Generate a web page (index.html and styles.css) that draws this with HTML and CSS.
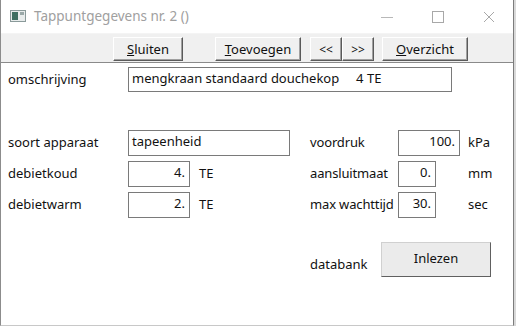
FILE: index.html
```html
<!DOCTYPE html>
<html lang="nl">
<head>
    <meta charset="UTF-8">
    <title>Tappuntgegevens nr. 2 ()</title>
    <link rel="stylesheet" href="styles.css">
</head>
<body>
    <div class="window">
        <div class="titlebar">
            <svg class="app-icon" width="16" height="12" viewBox="0 0 16 12">
                <rect x="0.5" y="0.5" width="15" height="11" fill="#e8ecec" stroke="#8a9a9a"/>
                <rect x="2" y="2" width="6" height="8" fill="#3f6f62"/>
                <rect x="10" y="2" width="4" height="3" fill="#9aa8a8"/>
            </svg>
            <span class="title">Tappuntgegevens nr. 2 ()</span>
            <div class="controls">
                <svg width="46" height="30" viewBox="0 0 46 30"><line x1="17" y1="15.5" x2="29" y2="15.5" stroke="#b8b8b8"/></svg>
                <svg width="46" height="30" viewBox="0 0 46 30"><rect x="17.5" y="9.5" width="11" height="11" fill="none" stroke="#a8a8a8"/></svg>
                <svg width="46" height="30" viewBox="0 0 46 30"><path d="M18 10 L28 20 M28 10 L18 20" stroke="#a8a8a8"/></svg>
            </div>
        </div>

        <div class="toolbar">
            <button class="btn w-sluiten"><u>S</u>luiten</button>
            <button class="btn w-toevoegen"><u>T</u>oevoegen</button>
            <div class="nav-pair">
                <button class="btn w-nav">&lt;&lt;</button>
                <button class="btn w-nav">&gt;&gt;</button>
            </div>
            <button class="btn w-overzicht"><u>O</u>verzicht</button>
        </div>

        <div class="content">
            <div class="row-top">
                <span class="label">omschrijving</span>
                <div class="field wide">mengkraan standaard douchekop&nbsp;&nbsp;&nbsp;&nbsp;&nbsp;4 TE</div>
            </div>

            <div class="grid">
                <span class="label">soort apparaat</span>
                <div class="cell"><div class="field mid">tapeenheid</div></div>
                <span class="label right">voordruk</span>
                <div class="cell"><div class="field num w62">100.</div><span class="unit">kPa</span></div>

                <span class="label">debietkoud</span>
                <div class="cell"><div class="field num w62">4.</div><span class="unit te">TE</span></div>
                <span class="label right">aansluitmaat</span>
                <div class="cell"><div class="field num w38">0.</div><span class="unit">mm</span></div>

                <span class="label">debietwarm</span>
                <div class="cell"><div class="field num w62">2.</div><span class="unit te">TE</span></div>
                <span class="label right">max wachttijd</span>
                <div class="cell"><div class="field num w38">30.</div><span class="unit">sec</span></div>
            </div>

            <div class="row-db">
                <span class="label">databank</span>
                <button class="btn-flat">Inlezen</button>
            </div>
        </div>
    </div>
</body>
</html>
```

FILE: styles.css
```css
body {
    margin: 0;
    background: #d9d9d9;
    font-family: "Noto Sans", "Open Sans", sans-serif;
    font-size: 13px;
    color: #111;
}
.window {
    width: 512px;
    height: 325px;
    background: white;
    border-left: 1px solid #8c8c8c;
    border-right: 1px solid #7c7c7c;
    border-bottom: 1px solid #c8c8c8;
    overflow: hidden;
}
.titlebar {
    height: 33px;
    display: flex;
    align-items: center;
    background: white;
}
.app-icon {
    margin-left: 9px;
    margin-right: 8px;
    margin-top: -1px;
}
.title {
    color: #a0a0a0;
    font-size: 13.5px;
    margin-top: -1px;
}
.controls {
    margin-left: auto;
    margin-right: 1px;
    display: flex;
    gap: 5px;
}
.toolbar {
    height: 30px;
    background: #f0f0f0;
    border-top: 1px solid #f4f4f4;
    border-bottom: 1px solid #8a8a8a;
    box-sizing: border-box;
    display: flex;
    align-items: flex-start;
    padding: 3px 0 0 112px;
}
.btn {
    height: 24px;
    background: #f0f0f0;
    border: 1px solid;
    border-color: #ffffff #5a5a5a #5a5a5a #ffffff;
    box-shadow: inset -1px -1px 0 #a0a0a0;
    font-family: inherit;
    font-size: 13px;
    color: #111;
    padding: 0;
}
.w-sluiten { width: 70px; margin-right: 32px; }
.w-toevoegen { width: 86px; margin-right: 9px; }
.w-nav { width: 32px; font-size: 12px; }
.nav-pair { display: flex; margin-right: 8px; }
.w-overzicht { width: 86px; }

.content {
    padding: 4px 0 0 7px;
}
.label {
    line-height: 25px;
    white-space: nowrap;
}
.label.right {
    letter-spacing: -0.15px;
}
.field {
    height: 25px;
    box-sizing: border-box;
    border: 1px solid #7a7a7a;
    background: white;
    padding: 0 3px;
    line-height: 21px;
    white-space: nowrap;
}
.row-top {
    display: grid;
    grid-template-columns: 120px 324px;
    height: 25px;
}
.grid {
    margin-top: 38px;
    display: grid;
    grid-template-columns: 120px 182px 88px 110px;
    grid-template-rows: 26px 26px 26px;
    row-gap: 5px;
}
.cell {
    display: flex;
    align-items: flex-start;
}
.cell .field { height: 26px; }
.field.mid { width: 162px; }
.field.num {
    text-align: right;
    padding-right: 4px;
}
.w62 { width: 62px; }
.w38 { width: 38px; }
.unit {
    line-height: 25px;
    margin-left: 8px;
}
.unit.te { margin-left: 9px; }
.w38 + .unit { margin-left: 32px; }
.row-db {
    display: grid;
    grid-template-columns: 71px 110px;
    align-items: center;
    margin-top: 24px;
    padding-left: 302px;
}
.row-db .label {
    margin-top: 10px;
}
.btn-flat {
    width: 110px;
    height: 35px;
    background: #ebebeb;
    border: 1px solid;
    border-color: #d0d0d0 #606060 #606060 #d0d0d0;
    font-family: inherit;
    font-size: 13px;
    color: #111;
    padding: 0 0 4px;
}
```
